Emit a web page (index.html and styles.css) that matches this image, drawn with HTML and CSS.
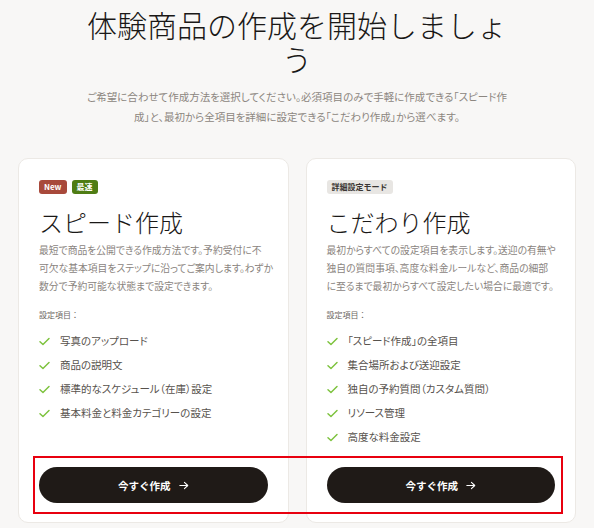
FILE: index.html
```html
<!DOCTYPE html>
<html lang="ja">
<head>
    <meta charset="UTF-8">
    <meta name="viewport" content="width=device-width, initial-scale=1.0">
    <title>体験商品の作成</title>
    <link rel="stylesheet" href="styles.css">
</head>
<body>
    <div class="page">
        <header class="intro">
            <h1>体験商品の作成を開始しましょう</h1>
            <p>ご希望に合わせて作成方法を選択してください。必須項目のみで手軽に作成できる「スピード作<br>成」と、最初から全項目を詳細に設定できる「こだわり作成」から選べます。</p>
        </header>

        <div class="cards">
            <div class="card">
                <div class="badges">
                    <span class="badge badge-new">New</span>
                    <span class="badge badge-fast">最速</span>
                </div>
                <h2>スピード作成</h2>
                <p class="desc">最短で商品を公開できる作成方法です。予約受付に不<br>可欠な基本項目をステップに沿ってご案内します。わずか<br>数分で予約可能な状態まで設定できます。</p>
                <div class="label">設定項目：</div>
                <ul class="items">
                    <li><svg class="check" viewBox="0 0 12 10"><polyline points="1,5.2 4.3,8.3 11,1.6"/></svg>写真のアップロード</li>
                    <li><svg class="check" viewBox="0 0 12 10"><polyline points="1,5.2 4.3,8.3 11,1.6"/></svg>商品の説明文</li>
                    <li><svg class="check" viewBox="0 0 12 10"><polyline points="1,5.2 4.3,8.3 11,1.6"/></svg>標準的なスケジュール（在庫）設定</li>
                    <li><svg class="check" viewBox="0 0 12 10"><polyline points="1,5.2 4.3,8.3 11,1.6"/></svg>基本料金と料金カテゴリーの設定</li>
                </ul>
                <button class="btn">今すぐ作成 <svg class="arrow" viewBox="0 0 12 10"><path d="M1 5h9.5M6.5 1.2 10.5 5 6.5 8.8"/></svg></button>
            </div>

            <div class="card">
                <div class="badges">
                    <span class="badge badge-mode">詳細設定モード</span>
                </div>
                <h2>こだわり作成</h2>
                <p class="desc">最初からすべての設定項目を表示します。送迎の有無や<br>独自の質問事項、高度な料金ルールなど、商品の細部<br>に至るまで最初からすべて設定したい場合に最適です。</p>
                <div class="label">設定項目：</div>
                <ul class="items">
                    <li><svg class="check" viewBox="0 0 12 10"><polyline points="1,5.2 4.3,8.3 11,1.6"/></svg>「スピード作成」の全項目</li>
                    <li><svg class="check" viewBox="0 0 12 10"><polyline points="1,5.2 4.3,8.3 11,1.6"/></svg>集合場所および送迎設定</li>
                    <li><svg class="check" viewBox="0 0 12 10"><polyline points="1,5.2 4.3,8.3 11,1.6"/></svg>独自の予約質問（カスタム質問）</li>
                    <li><svg class="check" viewBox="0 0 12 10"><polyline points="1,5.2 4.3,8.3 11,1.6"/></svg>リソース管理</li>
                    <li><svg class="check" viewBox="0 0 12 10"><polyline points="1,5.2 4.3,8.3 11,1.6"/></svg>高度な料金設定</li>
                </ul>
                <button class="btn">今すぐ作成 <svg class="arrow" viewBox="0 0 12 10"><path d="M1 5h9.5M6.5 1.2 10.5 5 6.5 8.8"/></svg></button>
            </div>
        </div>

        <!-- 注目枠 -->
        <div class="highlight"></div>
    </div>
</body>
</html>
```

FILE: styles.css
```css
body {
    margin: 0;
    background-color: #f8f7f6;
    font-family: "Noto Sans CJK JP", "Noto Sans", sans-serif;
    color: #2b2725;
}
.page {
    position: relative;
    min-height: 528px;
}
.intro {
    width: 436px;
    margin: 0 auto;
    padding-top: 10px;
    text-align: center;
}
h1 {
    margin: 0;
    font-family: "Liberation Serif", "Noto Sans CJK JP", serif;
    font-size: 30px;
    font-weight: 300;
    line-height: 34px;
    color: #1a1817;
}
.intro p {
    margin: 9px 0 0;
    font-size: 10.5px;
    line-height: 20px;
    color: #8c8680;
    font-feature-settings: "palt";
    white-space: nowrap;
}
.cards {
    display: grid;
    grid-template-columns: repeat(2, minmax(0, 1fr));
    gap: 17px;
    padding: 0 18px;
    margin-top: 31px;
}
.card {
    display: flex;
    flex-direction: column;
    min-width: 0;
    background: #fff;
    border: 1px solid #ece9e5;
    border-radius: 10px;
    padding: 21px 20px 19px 20px;
}
.badges {
    display: flex;
    gap: 5px;
}
.badge {
    height: 14px;
    line-height: 14px;
    padding: 0 5px;
    border-radius: 3px;
    font-size: 8px;
    font-weight: bold;
    color: #fff;
}
.badge-new {
    background-color: #a8493b;
}
.badge-fast {
    background-color: #4f7d14;
}
.badge-mode {
    background-color: #e8e6e3;
    color: #3a3633;
}
h2 {
    margin: 15px 0 0;
    font-family: "Liberation Serif", "Noto Sans CJK JP", serif;
    font-size: 24px;
    font-weight: 300;
    line-height: 30px;
    color: #1a1817;
}
.desc {
    margin: 2px 0 0;
    font-size: 9.8px;
    line-height: 18px;
    color: #8a847e;
    font-feature-settings: "palt";
    white-space: nowrap;
}
.label {
    margin-top: 14px;
    font-size: 8px;
    line-height: 12px;
    color: #6e6863;
}
.items {
    list-style: none;
    margin: 12px 0 22px;
    padding: 0;
    display: flex;
    flex-direction: column;
    gap: 8px;
}
.items li {
    display: flex;
    align-items: center;
    gap: 10px;
    font-size: 10.5px;
    line-height: 16px;
    color: #57524d;
    font-feature-settings: "palt";
}
.check {
    width: 11px;
    height: 9px;
    fill: none;
    stroke: #7cc23c;
    stroke-width: 1.6;
    stroke-linecap: round;
    stroke-linejoin: round;
}
.btn {
    margin-top: auto;
    height: 36px;
    border: none;
    border-radius: 18px;
    background-color: #1f1a17;
    color: #fff;
    font-family: "Noto Sans CJK JP", sans-serif;
    font-size: 10.5px;
    font-weight: bold;
    display: flex;
    align-items: center;
    justify-content: center;
    gap: 8px;
    cursor: pointer;
}
.arrow {
    width: 10px;
    height: 9px;
    fill: none;
    stroke: #fff;
    stroke-width: 1.3;
    stroke-linecap: round;
    stroke-linejoin: round;
}
.highlight {
    position: absolute;
    left: 33px;
    top: 456px;
    width: 526px;
    height: 54px;
    border: 2px solid #e8000f;
}
```
